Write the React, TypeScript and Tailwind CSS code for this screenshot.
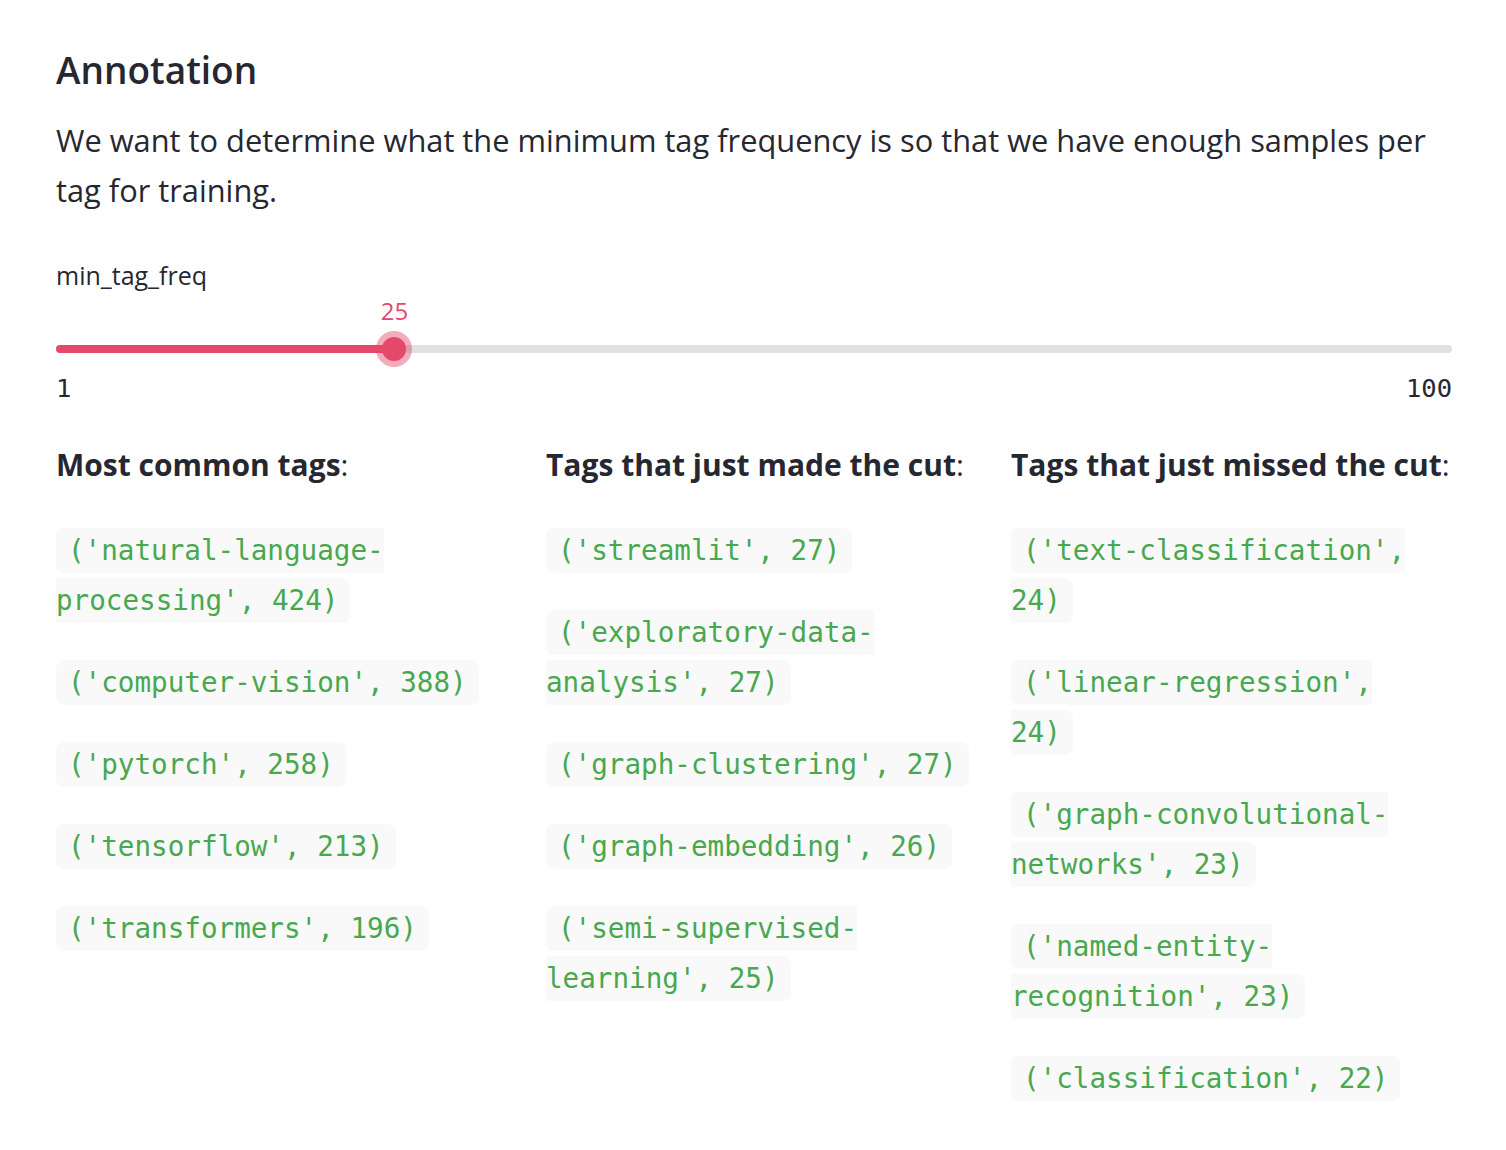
import React from 'react';

const mono = { fontFamily: '"DejaVu Sans Mono", "Liberation Mono", monospace' };

const columns = [
  {
    title: 'Most common tags',
    items: [
      "('natural-language-processing', 424)",
      "('computer-vision', 388)",
      "('pytorch', 258)",
      "('tensorflow', 213)",
      "('transformers', 196)",
    ],
  },
  {
    title: 'Tags that just made the cut',
    items: [
      "('streamlit', 27)",
      "('exploratory-data-analysis', 27)",
      "('graph-clustering', 27)",
      "('graph-embedding', 26)",
      "('semi-supervised-learning', 25)",
    ],
  },
  {
    title: 'Tags that just missed the cut',
    items: [
      "('text-classification', 24)",
      "('linear-regression', 24)",
      "('graph-convolutional-networks', 23)",
      "('named-entity-recognition', 23)",
      "('classification', 22)",
    ],
  },
];

function Slider() {
  const pct = ((25 - 1) / (100 - 1)) * 100;
  return (
    <div className="mt-[44px]">
      <div className="text-[25px] leading-[32px] text-[#262730]">min_tag_freq</div>
      <div className="relative mt-[10px] h-[72px]">
        {/* track */}
        <div className="absolute left-0 right-0 top-[44px] h-[8px] rounded-full bg-[#e0e0e0]" />
        <div className="absolute left-0 top-[44px] h-[8px] rounded-full bg-[#e4486a]" style={{ width: `${pct}%` }} />
        {/* thumb */}
        <div className="absolute top-[48px] -translate-x-1/2 -translate-y-1/2" style={{ left: `${pct}%` }}>
          <div className="flex h-[36px] w-[36px] items-center justify-center rounded-full bg-[#e4486a]/45">
            <div className="h-[24px] w-[24px] rounded-full bg-[#e4486a]" />
          </div>
        </div>
        <div
          className="absolute top-[-5px] -translate-x-1/2 text-[24px] leading-[30px] text-[#e4486a]"
          style={{ left: `${pct}%` }}
        >
          25
        </div>
      </div>
      <div className="flex justify-between text-[25.5px] leading-[30px] text-[#262730]" style={mono}>
        <span>1</span>
        <span>100</span>
      </div>
    </div>
  );
}

export default function App() {
  return (
    <div
      className="min-h-[1150px] w-[1506px] bg-white pl-[56px] pr-[54px] pt-[44px] text-[#262730]"
      style={{ fontFamily: '"Open Sans", "Noto Sans", sans-serif' }}
    >
      <h2 className="text-[37px] font-semibold leading-[52px]">Annotation</h2>
      <p className="mt-[19px] text-[30.8px] leading-[50px]">
        We want to determine what the minimum tag frequency is so that we have enough samples per tag for training.
      </p>

      <Slider />

      <div className="mt-[37px] grid grid-cols-[490px_465px_430px]">
        {columns.map((col) => (
          <div key={col.title} className="pr-[20px] last:pr-0">
            <div className="whitespace-nowrap text-[30px] leading-[50px]">
              <span className="font-bold">{col.title}</span>:
            </div>
            <div className="mt-[36px] flex flex-col gap-[32px]">
              {col.items.map((t) => (
                <p key={t} className="text-[27.6px] leading-[50px]" style={mono}>
                  <code
                    className="rounded-[8px] bg-[#f9f9f9] px-[12px] py-[6px] text-[#48a84e] [overflow-wrap:break-word] [box-decoration-break:slice]"
                    style={mono}
                  >
                    {t}
                  </code>
                </p>
              ))}
            </div>
          </div>
        ))}
      </div>
    </div>
  );
}
